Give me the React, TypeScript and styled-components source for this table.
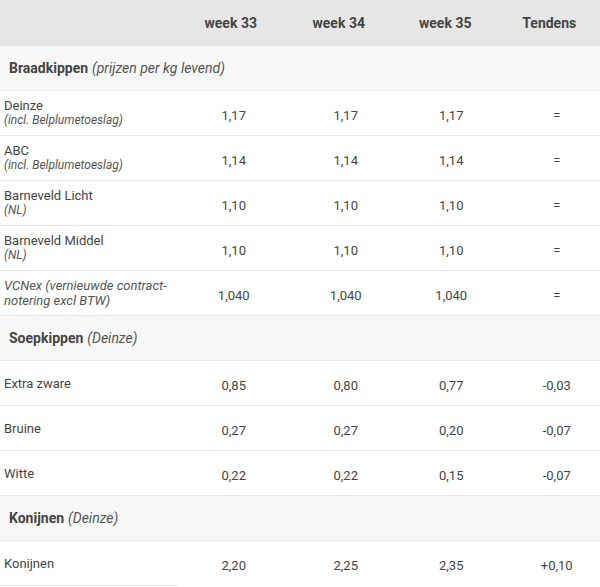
import styled, { createGlobalStyle } from "styled-components";

const Global = createGlobalStyle`
    body {
        margin: 0;
        background: #ffffff;
        font-family: Roboto, "Liberation Sans", sans-serif;
        color: #444444;
    }
`;

const Table = styled.div`
    width: 600px;
    display: grid;
    grid-template-columns: 178px repeat(4, 1fr);
`;

const HeadCell = styled.div<{ $offset?: number }>`
    height: 46px;
    background: #e6e6e6;
    border-bottom: 1px solid #e0e0e0;
    box-sizing: border-box;
    display: flex;
    align-items: center;
    justify-content: center;
    padding-left: ${(p) => p.$offset ?? 0}px;
    font-weight: 700;
    font-size: 14px;
    color: #444;
`;

const Section = styled.div`
    grid-column: 1 / -1;
    height: 45px;
    box-sizing: border-box;
    background: #f7f7f7;
    border-bottom: 1px solid #e8e8e8;
    display: flex;
    align-items: center;
    padding-left: 9px;
    font-size: 14px;
    color: #444;

    b {
        font-weight: 700;
        margin-right: 4px;
    }
    i {
        color: #555;
    }
`;

const Label = styled.div`
    height: 45px;
    box-sizing: border-box;
    border-bottom: 1px solid #e8e8e8;
    display: flex;
    flex-direction: column;
    justify-content: center;
    padding-left: 4px;
    font-size: 13px;
    line-height: 15px;
    color: #444;
`;

const Sub = styled.i<{ $size: number }>`
    font-size: ${(p) => p.$size}px;
    color: #555;
`;

const Value = styled.div<{ $last?: boolean; $offset: number }>`
    height: 45px;
    box-sizing: border-box;
    border-bottom: 1px solid ${(p) => (p.$last ? "transparent" : "#e8e8e8")};
    display: flex;
    align-items: center;
    justify-content: center;
    padding-left: ${(p) => p.$offset}px;
    padding-top: 4px;
    font-size: 13px;
    color: #444;
`;

// body columns sit a bit right of the header text
const headOffsets = [0, 5, 7, 4];
const bodyOffsets = [6, 19, 19, 19];

type Row = { name: string; sub?: string; italic?: boolean; values: string[] };

const braad: Row[] = [
    { name: "Deinze", sub: "(incl. Belplumetoeslag)", values: ["1,17", "1,17", "1,17", "="] },
    { name: "ABC", sub: "(incl. Belplumetoeslag)", values: ["1,14", "1,14", "1,14", "="] },
    { name: "Barneveld Licht", sub: "(NL)", values: ["1,10", "1,10", "1,10", "="] },
    { name: "Barneveld Middel", sub: "(NL)", values: ["1,10", "1,10", "1,10", "="] },
    {
        name: "VCNex (vernieuwde contract-",
        sub: "notering excl BTW)",
        italic: true,
        values: ["1,040", "1,040", "1,040", "="],
    },
];

const soep: Row[] = [
    { name: "Extra zware", values: ["0,85", "0,80", "0,77", "-0,03"] },
    { name: "Bruine", values: ["0,27", "0,27", "0,20", "-0,07"] },
    { name: "Witte", values: ["0,22", "0,22", "0,15", "-0,07"] },
];

const konijn: Row[] = [{ name: "Konijnen", values: ["2,20", "2,25", "2,35", "+0,10"] }];

function Rows({ rows, last }: { rows: Row[]; last?: boolean }) {
    return (
        <>
            {rows.map((r) => (
                <>
                    <Label key={r.name}>
                        {r.italic ? <Sub $size={13}>{r.name}</Sub> : <span>{r.name}</span>}
                        {r.sub && <Sub $size={r.italic ? 13 : 12}>{r.sub}</Sub>}
                    </Label>
                    {r.values.map((v, i) => (
                        <Value key={i} $last={last} $offset={bodyOffsets[i]}>
                            {v}
                        </Value>
                    ))}
                </>
            ))}
        </>
    );
}

function App() {
    return (
        <>
            <Global />
            <Table>
                <HeadCell />
                {["week 33", "week 34", "week 35", "Tendens"].map((h, i) => (
                    <HeadCell key={h} $offset={headOffsets[i]}>
                        {h}
                    </HeadCell>
                ))}

                <Section>
                    <b>Braadkippen</b>
                    <i>(prijzen per kg levend)</i>
                </Section>
                <Rows rows={braad} />

                <Section>
                    <b>Soepkippen</b>
                    <i>(Deinze)</i>
                </Section>
                <Rows rows={soep} />

                <Section>
                    <b>Konijnen</b>
                    <i>(Deinze)</i>
                </Section>
                <Rows rows={konijn} last />
            </Table>
        </>
    );
}

export default App;
